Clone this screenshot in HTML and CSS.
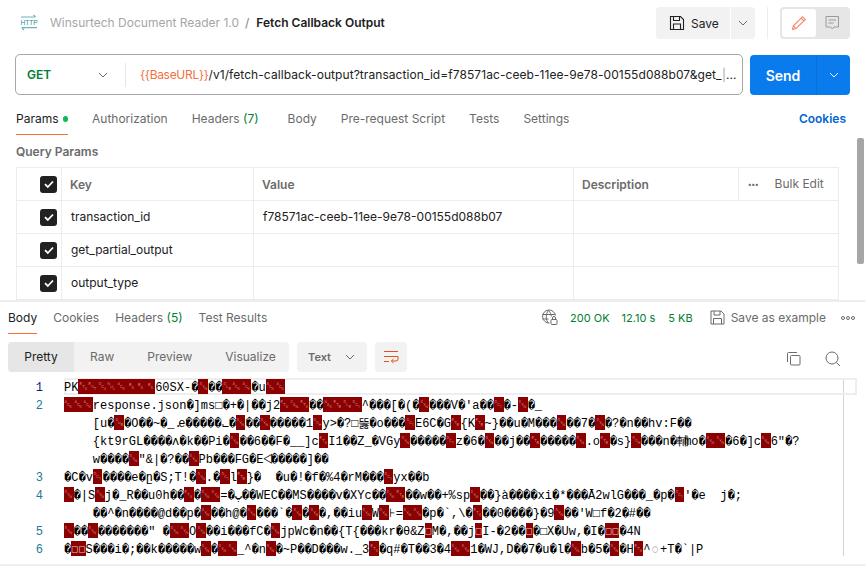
FILE: index.html
```html
<!DOCTYPE html>
<html lang="en">
<head>
<meta charset="utf-8">
<title>Fetch Callback Output</title>
<link rel="stylesheet" href="styles.css">
</head>
<body>
<div class="app">
  <section class="request">
    <header class="topbar">
      <svg class="http-icon" width="18" height="18" viewBox="0 0 18 18" fill="none" stroke="#6fb4bc" stroke-width="1.200"><path d="M1 3h14M13.500 .8l2 2.200M17 13.700H2M3.800 16l-2-2.300"/><text x="0.500" y="11" textLength="17" lengthAdjust="spacingAndGlyphs" class="http-text">HTTP</text></svg>
      <span class="crumb">Winsurtech Document Reader 1.0</span>
      <span class="slash">/</span>
      <span class="crumb-current">Fetch Callback Output</span>
      <div class="top-actions">
        <button class="btn save-btn">
          <svg width="16" height="16" viewBox="0 0 16 16" fill="none" stroke="#212121" stroke-width="1.100"><path d="M1.500 1.500h10l3 3v10h-13zM4.500 1.500v4h6v-4M4.500 14.500v-5.500h7v5.500"/></svg>
          <span>Save</span>
        </button>
        <button class="btn chevron-btn"><svg class="chev" width="10" height="6" viewBox="0 0 10 6"><path d="M1 1l4 4 4-4"/></svg></button>
        <span class="vr"></span>
        <div class="toggle">
          <span class="toggle-on"><svg width="16" height="16" viewBox="0 0 16 16" fill="none" stroke="#f4845f" stroke-width="1.100"><path d="M1.500 14.500l.9-3.600L11.600 1.700l2.700 2.700-9.200 9.200zM10.200 3.100l2.700 2.700M2.400 10.900l2.700 2.700"/></svg></span>
          <span class="toggle-off"><svg width="16" height="16" viewBox="0 0 16 16" fill="none" stroke="#9a9a9a" stroke-width="1"><path d="M2 1.500h12.500v10.500h-4.500l-1.750 2-1.750-2h-4.500zM4.500 5h7.500M4.500 8h5"/></svg></span>
        </div>
      </div>
    </header>
    <div class="urlrow">
      <div class="urlbox">
        <span class="method">GET</span>
        <svg class="chev method-chev" width="10" height="6" viewBox="0 0 10 6"><path d="M1 1l4 4 4-4"/></svg>
        <span class="url-sep"></span>
        <span class="url"><span class="var">{{BaseURL}}</span>/v1/fetch-callback-output?transaction_id=f78571ac-ceeb-11ee-9e78-00155d088b07&amp;get_<span class="caret">|</span>...</span>
      </div>
      <div class="send">
        <span class="send-label">Send</span>
        <span class="send-more"><svg class="chev chev-white" width="10" height="6" viewBox="0 0 10 6"><path d="M1 1l4 4 4-4"/></svg></span>
      </div>
    </div>
    <nav class="reqtabs">
      <span class="tab tab-active">Params<span class="dot"></span></span>
      <span class="tab">Authorization</span>
      <span class="tab tab-headers">Headers <span class="count">(7)</span></span>
      <span class="tab">Body</span>
      <span class="tab">Pre-request Script</span>
      <span class="tab">Tests</span>
      <span class="tab">Settings</span>
      <span class="cookies">Cookies</span>
    </nav>
    <div class="qp-title">Query Params</div>
    <div class="qtable">
      <div class="qrow qhead">
        <div class="qc qcheck"><span class="check"><svg width="12" height="12" viewBox="0 0 12 12"><path d="M2 6.200l2.800 2.800L10 3.500"/></svg></span></div>
        <div class="qc">Key</div>
        <div class="qc">Value</div>
        <div class="qc">Description</div>
        <div class="qc qbulk"><span class="dots3">•••</span><span class="bulk">Bulk Edit</span></div>
      </div>
      <div class="qrow">
        <div class="qc qcheck"><span class="check"><svg width="12" height="12" viewBox="0 0 12 12"><path d="M2 6.200l2.800 2.800L10 3.500"/></svg></span></div>
        <div class="qc qtext">transaction_id</div>
        <div class="qc qtext">f78571ac-ceeb-11ee-9e78-00155d088b07</div>
        <div class="qc qspan"></div>
      </div>
      <div class="qrow">
        <div class="qc qcheck"><span class="check"><svg width="12" height="12" viewBox="0 0 12 12"><path d="M2 6.200l2.800 2.800L10 3.500"/></svg></span></div>
        <div class="qc qtext">get_partial_output</div>
        <div class="qc"></div>
        <div class="qc qspan"></div>
      </div>
      <div class="qrow">
        <div class="qc qcheck"><span class="check"><svg width="12" height="12" viewBox="0 0 12 12"><path d="M2 6.200l2.800 2.800L10 3.500"/></svg></span></div>
        <div class="qc qtext">output_type</div>
        <div class="qc"></div>
        <div class="qc qspan"></div>
      </div>
    </div>
    <span class="scrollbar"></span>
  </section>
  <section class="response">
    <div class="restabs">
      <span class="rtab rtab-active">Body</span>
      <span class="rtab">Cookies</span>
      <span class="rtab">Headers <span class="count">(5)</span></span>
      <span class="rtab">Test Results</span>
      <div class="res-status">
        <svg class="globe" width="17" height="17" viewBox="0 0 17 17" fill="none" stroke="#6b6b6b" stroke-width="1"><path d="M8.500 14A6.500 6.500 0 1 1 14.500 6.500M1.500 5.500h12.500M1.500 10h6M7.500 1.500c-3 3-3 9.500 0 12.500M7.500 1.500c2 2 2.800 4.500 2.800 6"/><rect x="10" y="10.500" width="6" height="5" rx=".8"/><path d="M11.500 10.500V9a1.500 1.500 0 0 1 3 0v1.500"/></svg>
        <span class="ok ok-1">200 OK</span>
        <span class="ok ok-2">12.10 s</span>
        <span class="ok ok-3">5 KB</span>
        <svg class="save-small" width="15" height="15" viewBox="0 0 15 15" fill="none" stroke="#6b6b6b" stroke-width="1"><path d="M1 1h10l3 3v10H1zM4 1v4h6V1M3.500 14V8.500h8V14"/></svg>
        <span class="save-ex">Save as example</span>
        <span class="more">
          <svg width="14" height="6" viewBox="0 0 14 6" fill="none" stroke="#6b6b6b"><circle cx="2" cy="3" r="1.500"/><circle cx="7" cy="3" r="1.500"/><circle cx="12" cy="3" r="1.500"/></svg>
        </span>
      </div>
    </div>
    <div class="restools">
      <div class="seg">
        <span class="seg-item seg-active">Pretty</span>
        <span class="seg-item">Raw</span>
        <span class="seg-item">Preview</span>
        <span class="seg-item">Visualize</span>
      </div>
      <div class="fmt"><span>Text</span><svg class="chev" width="10" height="6" viewBox="0 0 10 6"><path d="M1 1l4 4 4-4"/></svg></div>
      <div class="wrap-btn"><svg width="16" height="14" viewBox="0 0 16 14" fill="none" stroke="#e2521d" stroke-width="1"><path d="M1 1.500h14M1 6.500h14M1 11.500h5M15 6.500v2.500a2 2 0 0 1-2 2H8.500M10.500 9l-2.200 2 2.200 2"/></svg></div>
      <div class="res-icons">
        <svg width="15" height="15" viewBox="0 0 15 15" fill="none" stroke="#6b6b6b" stroke-width="1"><rect x="4.500" y="4.500" width="9.500" height="9.500" rx="1"/><path d="M11 1.500H2.500a1 1 0 0 0-1 1V11"/></svg>
        <svg width="16" height="16" viewBox="0 0 16 16" fill="none" stroke="#6b6b6b" stroke-width="1"><circle cx="7" cy="7" r="6"/><path d="M11.500 11.500l3.500 3.500"/></svg>
      </div>
    </div>
    <div class="editor">
      <div class="gutter">
        <div class="ln ln-cur">1</div><div class="ln">2</div><div class="ln"></div><div class="ln"></div><div class="ln"></div><div class="ln">3</div><div class="ln">4</div><div class="ln"></div><div class="ln">5</div><div class="ln">6</div>
      </div>
      <div class="code">
        <div class="cl cl-cur">PK<i>␃</i><i>␄</i><i>␔</i><i>␀</i><i>␆</i><i>␈</i><i>␈</i><i>␈</i>60SX-�<i>␖</i>��<i>␐</i><i>␆</i><i>␆</i>�u<i>␆</i><i>␆</i></div>
        <div class="cl"><i>␆</i><i>␆</i><i>␆</i>response.json�]ms<b>□</b>�+�|��j2<i>␃</i><i>␘</i><i>␃</i>��<i>␕</i><i>␗</i><i>␐</i><i>␑</i>^���[�(�<i>␖</i>���V�'a��<i>␑</i>�-<i>␖</i>�_</div>
        <div class="cl cl-wrap">[u�<i>␚</i>�O��~�_<u>.</u>e�����<b>⨽</b>�<i>␖</i>��<i>␖</i>�����1<i>␁</i>y&gt;�?<b>□</b><b class="wide">뚫</b>�o���<i>␑</i>E6C�G<i>␗</i>{K<i>␗</i>~}��u�M���<i>␖</i>��7�<i>␖</i>�?�n��hv:F��</div>
        <div class="cl cl-wrap">{kt9rGL����<b>ʌ</b>�k��Pi�<i>␖</i>��6��F�__]c<i>␃</i>I1��Z_�VGy<i>␖</i>�����<i>␑</i>z�6�<i>␖</i>��j��<i>␗</i>�����<i>␖</i>.o<i>␗</i>�s}<i>␁</i>���n�<b>輔</b>mo�<i>␖</i><i>␖</i>�6�]c<i>␖</i>6"�?</div>
        <div class="cl cl-wrap">w����<i>␖</i>"&amp;|�?��<i>␖</i>Pb���FG�E<b>⨞</b>�����]��</div>
        <div class="cl">�C�v<i>␑</i>����e�<b>ը</b>�S;T!�<i>␖</i>.�<i>␑</i>l<i>␗</i>}�&nbsp;&nbsp;�u�!�f�%4�rM���<i>␑</i>yx��b</div>
        <div class="cl"><i>␖</i>�|S<i>␖</i>j�_R��u0h��<i>␃</i>�<i>␖</i><i>␖</i>=�<b>پ</b>��WEC��MS����v�XYc��<i>␖</i><i>␗</i>��w��+%sp<i>␖</i>��}à����xi�*���Ā2wlG���_�p�<i>␑</i>'�e&nbsp;&nbsp;j�;</div>
        <div class="cl cl-wrap">��^�n����@d��p�<i>␖</i>��h@�<i>␖</i>���`�<i>␖</i>�<i>␖</i>�,��iu<i>␖</i>W<i>␖</i><b>⊦</b>=<i>␖</i><i>␖</i>�p�`,\�<i>␃</i>��0����}�9<i>␖</i>��'W<b>□</b>f�2�#��</div>
        <div class="cl"><i>␖</i>��<i>␖</i>�������"&nbsp;�<i>␖</i><i>␖</i>O<i>␖</i>��i���fC�<i>␖</i>jpWc�n��{T{���kr�θ&amp;Z<em>□</em>M�,��j<em>□</em>I-�2��<em>□</em>�<b>□</b>X�Uw,�I�<em>□</em><em>□</em>�4N</div>
        <div class="cl">�<em>□</em><em>□</em>S���i�;��k�����w<i>␖</i>�<i>␖</i><i>␖</i>_^�n<i>␖</i>�~P��D���w._3<i>␃</i>�q#�T��3�4<i>␖</i><i>␖</i>1�WJ,D��7�u�l�<i>␖</i>b�5�<i>␖</i>�H<i>␃</i>^<b class="ring">◌</b>+T�`|P</div>
      </div>
    </div>
  </section>
</div>
</body>
</html>
```
FILE: styles.css
```css
* { box-sizing: border-box; }
html, body { margin: 0; padding: 0; background: #fff; }
body { width: 865px; height: 566px; overflow: hidden; font-family: Inter, "Liberation Sans", sans-serif; font-size: 12px; color: #212121; }
.app { display: flex; flex-direction: column; height: 566px; }
button { font: inherit; border: 0; padding: 0; }

.request { position: relative; height: 300px; overflow: hidden; flex: none; }
.topbar { display: flex; align-items: center; height: 46px; padding: 0 15px 0 20px; }
.http-icon { margin-right: 12px; flex: none; overflow: visible; }
.http-text { font: 8px "Liberation Sans", sans-serif; fill: #2f8a96; stroke: none; }
.crumb, .slash, .crumb-current { margin-bottom: 2px; }
.crumb { color: #a6a6a6; }
.slash { color: #808080; margin-left: 6px; margin-right: 7px; }
.crumb-current { font-weight: 600; color: #212121; }
.top-actions { margin-left: auto; display: flex; align-items: center; height: 32px; }
.btn { background: #f2f2f2; color: #212121; height: 32px; display: flex; align-items: center; }
.save-btn { width: 74px; border-radius: 4px 0 0 4px; padding-left: 13px; gap: 6px; }
.chevron-btn { width: 24px; margin-left: 1px; border-radius: 0 4px 4px 0; justify-content: center; }
.chev { fill: none; stroke: #6b6b6b; stroke-width: 1; flex: none; }
.chev-white { stroke: #fff; }
.vr { width: 1px; height: 32px; background: #ededed; margin: 0 12px; }
.toggle { width: 70px; height: 32px; background: #e6e6e6; border-radius: 4px; padding: 2px; display: flex; }
.toggle-on { width: 34px; height: 28px; background: #fff; border-radius: 3px; display: flex; align-items: center; justify-content: center; }
.toggle-off { flex: 1; display: flex; align-items: center; justify-content: center; }

.urlrow { display: flex; margin: 8px 15px 0 15px; gap: 7px; height: 42px; }
.urlbox { width: 728px; height: 41px; border: 1px solid #a6a6a6; border-radius: 5px; display: flex; align-items: center; padding-left: 11px; }
.method { font-weight: 600; color: #007f31; width: 71px; }
.method-chev { margin-right: 17px; }
.url-sep { width: 1px; height: 24px; background: #e6e6e6; margin-right: 14px; }
.url { white-space: nowrap; letter-spacing: 0.07px; color: #212121; }
.var { color: #f36f3f; letter-spacing: -0.3px; }
.caret { color: #a6a6a6; }
.send { width: 100px; height: 40px; background: #097bed; border-radius: 4px; color: #fff; display: flex; margin-top: 1px; }
.send-label { width: 67px; display: flex; align-items: center; justify-content: center; font-size: 14px; font-weight: 600; border-right: 1px solid #0a6fd4; }
.send-more { flex: 1; display: flex; align-items: center; justify-content: center; }

.reqtabs { display: flex; align-items: flex-start; height: 39px; padding: 7px 19px 0 16px; }
.tab { color: #6b6b6b; height: 32px; padding-top: 8px; line-height: 16px; margin-right: 24px; white-space: nowrap; }
.tab-active { color: #212121; border-bottom: 1px solid #ff6c37; width: 52px; display: flex; align-items: flex-start; }
.tab-headers { margin-right: 29px; }
.dot { width: 6px; height: 6px; border-radius: 50%; background: #0cbb52; margin: 5px 0 0 4px; }
.count { color: #007f31; }
.cookies { margin-left: auto; color: #0265d2; font-weight: 600; padding-top: 8px; line-height: 16px; }

.qp-title { color: #6b6b6b; font-weight: 600; padding-left: 16px; line-height: 16px; height: 23px; margin-top: 9px; }
.qtable { width: 823px; margin-left: 16px; border-top: 1px solid #ededed; border-left: 1px solid #ededed; border-right: 1px solid #ededed; }
.qrow { display: grid; grid-template-columns: 45px 192px 320px 165px 1fr; height: 33px; border-bottom: 1px solid #ededed; }
.qc { display: flex; align-items: center; padding-left: 9px; border-right: 1px solid #ededed; white-space: nowrap; color: #212121; }
.qc:last-child { border-right: 0; }
.qtext { padding-bottom: 2px; }
.qhead .qc { color: #6b6b6b; font-weight: 600; padding-left: 8px; }
.qcheck { padding-left: 23px !important; }
.qspan { grid-column: span 2; }
.check { width: 17px; height: 17px; border-radius: 3px; background: #212121; display: flex; align-items: center; justify-content: center; }
.check path { fill: none; stroke: #fff; stroke-width: 1.800; }
.qhead .qbulk { padding-left: 9px; gap: 16px; }
.qhead .dots3 { font-size: 7px; color: #6b6b6b; }
.qhead .bulk { font-weight: 400; color: #6b6b6b; margin-bottom: 2px; }
.scrollbar { position: absolute; right: 1px; top: 138px; width: 7px; height: 126px; background: #a6a6a6; border-radius: 2px; }

.response { flex: 1; border-top: 2px solid #ededed; position: relative; min-height: 0; }
.restabs { display: flex; height: 32px; padding-left: 8px; }
.rtab { color: #6b6b6b; margin-right: 16px; line-height: 16px; padding-top: 8px; height: 32px; white-space: nowrap; }
.rtab-active { color: #212121; border-bottom: 1px solid #ff6c37; }
.res-status { margin-left: auto; display: flex; align-items: center; height: 32px; padding-bottom: 1px; }
.globe { margin-right: 12px; }
.ok { color: #007f31; font-size: 11px; }
.ok-1 { margin-right: 12px; }
.ok-2 { margin-right: 13px; }
.ok-3 { margin-right: 17px; }
.save-small { margin-right: 6px; }
.save-ex { color: #6b6b6b; margin-right: 15px; }
.more { width: 24px; display: flex; }

.restools { display: flex; height: 34px; padding: 8px 0 0 8px; align-items: flex-start; }
.seg { display: flex; width: 281px; height: 30px; background: #f2f2f2; border-radius: 4px; overflow: hidden; }
.seg-item { flex: none; color: #6b6b6b; line-height: 30px; margin-right: 33px; white-space: nowrap; }
.seg-active { width: 66px; background: #e6e6e6; color: #212121; text-align: center; margin-right: 16px; }
.fmt { width: 70px; height: 30px; background: #f2f2f2; border-radius: 4px; margin-left: 8px; display: flex; align-items: center; padding-left: 11px; gap: 14px; color: #6b6b6b; font-size: 11px; font-weight: 600; }
.wrap-btn { width: 32px; height: 30px; background: #f2f2f2; border-radius: 4px; margin-left: 8px; display: flex; align-items: center; justify-content: center; }
.res-icons { margin-left: auto; display: flex; gap: 24px; padding: 9px 24px 0 0; }

.editor { display: flex; height: 186px; margin-top: 10px; font-family: "Liberation Mono", monospace; font-size: 12px; line-height: 18px; }
.gutter { width: 64px; flex: none; padding-top: 1px; }
.ln { height: 18px; width: 43px; text-align: right; color: #237893; }
.ln-cur { color: #0b216f; }
.code { width: 780px; border-right: 1px solid #d4d4d4; height: 178px; padding-top: 1px; }
.cl { height: 18px; white-space: nowrap; color: #000; }
.cl-wrap { padding-left: 28.800px; }
.cl-cur { box-shadow: 0 0 0 2px #eee inset; width: 793px; margin-top: -1px; padding-top: 1px; height: 17px; margin-bottom: 2px; }
.cl i, .cl em { display: inline-block; height: 15px; line-height: 15px; background: #8b0000; font-style: normal; overflow: hidden; vertical-align: top; text-align: center; }
.cl i { width: 9.600px; color: #d98a8a; font-family: "DejaVu Sans Mono", monospace; font-size: 11px; }
.cl em { width: 7.200px; color: #f3c6c6; font-family: "DejaVu Sans Mono", monospace; font-size: 10px; }
.cl b { display: inline-block; width: 7.200px; height: 18px; font-weight: 400; text-align: center; vertical-align: top; }
.cl b.wide { width: 10.800px; }
.cl b.ring { width: 9.600px; }
.cl u { display: inline-block; width: 3.600px; height: 18px; text-decoration: none; vertical-align: top; }
.response::after { content: ""; position: absolute; left: 0; right: 0; bottom: 0; height: 2px; background: #eee; }
```
